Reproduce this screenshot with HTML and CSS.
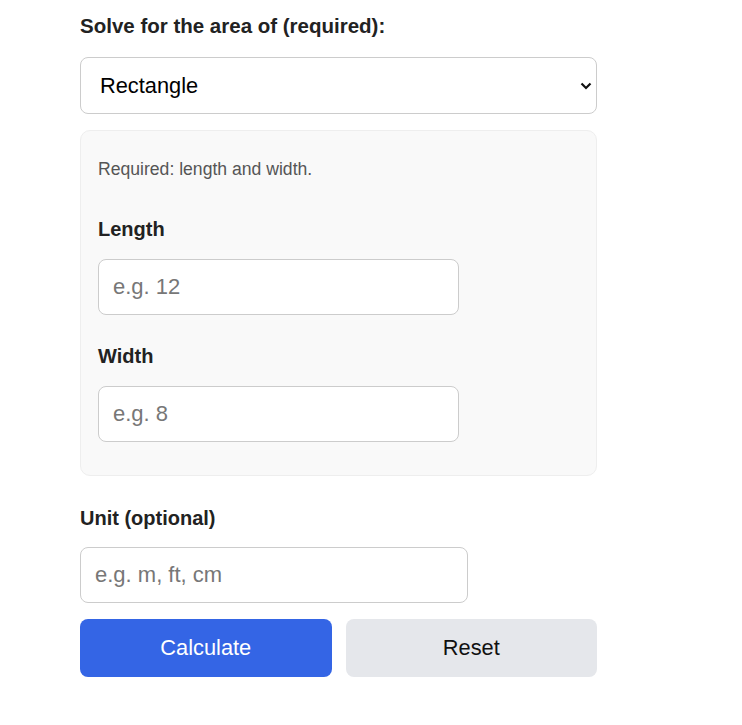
FILE: index.html
```html
<!DOCTYPE html>
<html lang="en">
<head>
  <meta charset="UTF-8">
  <title>Area Calculator</title>
  <link rel="stylesheet" href="styles.css">
</head>
<body>
  <form class="calc" id="areaForm">
    <label class="title" for="shape">Solve for the area of (required):</label>

    <div class="select-wrap">
      <select id="shape">
        <option value="rectangle">Rectangle</option>
        <option value="square">Square</option>
        <option value="triangle">Triangle</option>
        <option value="circle">Circle</option>
      </select>
      <svg class="chevron" width="12" height="8" viewBox="0 0 12 8">
        <path d="M1.5 1.5 L6 6 L10.5 1.5" fill="none" stroke="#111" stroke-width="2.2"/>
      </svg>
    </div>

    <div class="panel">
      <p class="hint">Required: length and width.</p>

      <div class="field">
        <label for="length">Length</label>
        <input type="text" id="length" placeholder="e.g. 12">
      </div>

      <div class="field">
        <label for="width">Width</label>
        <input type="text" id="width" placeholder="e.g. 8">
      </div>
    </div>

    <div class="field unit">
      <label for="unit">Unit (optional)</label>
      <input type="text" id="unit" placeholder="e.g. m, ft, cm">
    </div>

    <div class="actions">
      <button type="submit" class="btn primary">Calculate</button>
      <button type="reset" class="btn">Reset</button>
    </div>
  </form>
</body>
</html>
```

FILE: styles.css
```css
body {
  margin: 0;
  font-family: "Liberation Sans", Arial, sans-serif;
  color: #222;
  background: #fff;
}

.calc {
  width: 517px;
  margin-left: 80px;
  padding-top: 14px;
  display: flex;
  flex-direction: column;
}

.title {
  font-size: 20.5px;
  font-weight: bold;
  line-height: 23.5px;
  margin-bottom: 19px;
}

.select-wrap {
  position: relative;
}

select {
  width: 100%;
  height: 57px;
  appearance: none;
  -webkit-appearance: none;
  background: #fff;
  border: 1px solid #ccc;
  border-radius: 8px;
  padding: 0 19px;
  font-family: inherit;
  font-size: 21.8px;
  color: #000;
}

.chevron {
  position: absolute;
  right: 5px;
  top: 25px;
  pointer-events: none;
}

.panel {
  margin-top: 16px;
  background: #f9f9f9;
  border: 1px solid #eee;
  border-radius: 10px;
  padding: 28px 17px 17px;
  height: 346px;
  box-sizing: border-box;
}

.hint {
  margin: 0 0 39px;
  font-size: 17.6px;
  line-height: 20px;
  color: #555;
}

.field {
  display: flex;
  flex-direction: column;
  margin-bottom: 30px;
}

.field label {
  font-size: 20px;
  font-weight: bold;
  line-height: 23px;
  margin-bottom: 18px;
}

input {
  width: 75%;
  height: 56px;
  box-sizing: border-box;
  border: 1px solid #ccc;
  border-radius: 8px;
  padding: 0 14px;
  font-family: inherit;
  font-size: 22px;
  color: #222;
  background: #fff;
}

input::placeholder {
  color: #777;
}

.unit {
  margin-top: 31px;
  margin-bottom: 16px;
}

.unit label {
  margin-bottom: 17px;
}

.actions {
  display: grid;
  grid-template-columns: 1fr 1fr;
  gap: 14px;
}

.btn {
  height: 58px;
  border: none;
  border-radius: 8px;
  background: #e5e7eb;
  color: #111;
  font-family: inherit;
  font-size: 21.8px;
  cursor: pointer;
}

.btn.primary {
  background: #3465e5;
  color: #fff;
}
```
